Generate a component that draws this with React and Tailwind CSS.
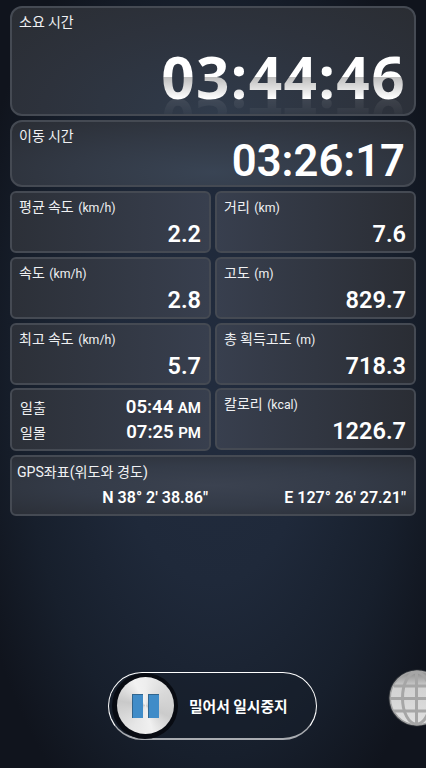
const FONT = "font-['Roboto','Noto_Sans_CJK_KR',sans-serif]";

const Card = ({ className = "", children }) => {
  return <div className={`border-2 border-[#454a53] ${className}`}>{children}</div>;
};

const Label = ({ unit, children }) => {
  return (
    <div className="flex items-baseline text-[14px] leading-[20px] text-[#f0f1f3] whitespace-pre">
      <span className="font-['Noto_Sans_CJK_KR',sans-serif]">{children}</span>
      {unit && <span className="ml-[4.5px] text-[12.3px]">({unit})</span>}
    </div>
  );
};

const StatCard = ({ label, unit, value }) => {
  return (
    <Card className="flex h-[62px] flex-col justify-between rounded-md pt-[3px] pr-[8px] pb-[4px] pl-[7px]">
      <Label unit={unit}>{label}</Label>
      <div className="text-right text-[23.5px] leading-[26px] font-semibold text-white">
        {value}
      </div>
    </Card>
  );
};

const SunRow = ({ label, time, period }) => {
  return (
    <div className="flex h-[25px] items-center justify-between">
      <Label>{label}</Label>
      <div className="flex items-baseline pt-px font-semibold text-white">
        <span className="text-[18.6px] leading-[25px]">{time}</span>
        <span className="ml-[4.5px] text-[15px] leading-[20px]">{period}</span>
      </div>
    </div>
  );
};

const Globe = () => {
  return (
    <svg viewBox="0 0 58 58" className="h-[58px] w-[58px]">
      <defs>
        <linearGradient id="globe" x1="0" y1="0" x2="0" y2="1">
          <stop offset="0" stopColor="#8a8a8a" />
          <stop offset="0.3" stopColor="#d2d2d2" />
          <stop offset="1" stopColor="#e0e0e0" />
        </linearGradient>
      </defs>
      <circle cx="29" cy="29" r="28.5" fill="#30343a" />
      <circle cx="29" cy="29" r="26.8" fill="url(#globe)" stroke="#a5a5a5" strokeWidth="1.5" />
      <g fill="none" stroke="#a6a6a6" strokeWidth="3">
        <path d="M28.5 3v52M3 29.5h52M6 17h46M6 42h46" />
        <ellipse cx="28.5" cy="29" rx="14" ry="26" />
      </g>
    </svg>
  );
};

const PauseSlider = () => {
  return (
    <div className="flex h-[68px] w-[209px] items-center rounded-full border border-b-2 border-white border-b-[#a9acb1] bg-[#161e2a]/50 pl-[3px]">
      <div className="flex h-[66px] w-[66px] items-center justify-center rounded-full bg-[#080b12]">
        <div className="flex h-[57px] w-[57px] items-center justify-center gap-[5px] rounded-full bg-[conic-gradient(#eeeeee,#d9d9d9_55deg,#cbcbcb_115deg,#f0f0f0_165deg,#e6e6e6_210deg,#c9c9c9_280deg,#f2f2f2_335deg,#eeeeee)]">
          <div className="h-[24px] w-[11px] border-t border-l border-[#31658e] bg-[#408cc8]" />
          <div className="h-[24px] w-[11px] border-t border-l border-[#31658e] bg-[#408cc8]" />
        </div>
      </div>
      <span className="ml-[11px] font-['Noto_Sans_CJK_KR',sans-serif] text-[14.8px] leading-[20px] font-bold whitespace-pre text-white">
        밀어서 일시중지
      </span>
    </div>
  );
};

const App = () => {
  return (
    <div
      className={`relative flex h-screen w-full flex-col overflow-hidden bg-[radial-gradient(ellipse_60%_65%_at_50%_50%,#222c3e_0%,#1f293a_40%,#171f2c_75%,#10141d_100%)] px-[10px] pt-[6px] ${FONT}`}
    >
      {/* 시간 */}
      <Card className="flex h-[110px] flex-col overflow-hidden rounded-xl bg-[radial-gradient(ellipse_at_50%_100%,#303b4b,#2d323c_60%,#2a2d33)] pt-[3px] pr-[8px] pl-[7px]">
        <Label>소요 시간</Label>
        <div className="mt-[5px] self-end bg-[linear-gradient(to_bottom,#ffffff_51%,#bdbdbd_51.5%,#ffffff_78%)] bg-clip-text font-['Noto_Sans',sans-serif] text-[58.5px] leading-[80px] font-bold tracking-[1.4px] text-transparent [-webkit-box-reflect:below_-34px_linear-gradient(transparent_50%,rgba(255,255,255,0.15))]">
          03:44:46
        </div>
      </Card>
      <Card className="mt-[4px] flex h-[67px] flex-col rounded-xl bg-[radial-gradient(ellipse_at_50%_80%,#394454,#323945_50%,#2a2d34)] pt-[3px] pr-[9px] pl-[7px]">
        <Label>이동 시간</Label>
        <div className="-mt-[8px] self-end text-[43.6px] leading-[50px] font-semibold text-white">
          03:26:17
        </div>
      </Card>

      {/* 운동 정보 */}
      <div className="mt-[4px] flex gap-[4px]">
        <div className="flex w-[201px] flex-col gap-[3.8px] [&>div]:bg-[linear-gradient(to_right,#2c3038,#383f4e)]">
          <StatCard label="평균 속도" unit="km/h" value="2.2" />
          <StatCard label="속도" unit="km/h" value="2.8" />
          <StatCard label="최고 속도" unit="km/h" value="5.7" />
          <Card className="h-[63px] rounded-md pt-[4px] pr-[8px] pl-[8px]">
            <SunRow label="일출" time="05:44" period="AM" />
            <SunRow label="일몰" time="07:25" period="PM" />
          </Card>
        </div>
        <div className="flex w-[201px] flex-col gap-[3.8px] [&>div]:bg-[linear-gradient(to_right,#383f4e,#2a2d34)]">
          <StatCard label="거리" unit="km" value="7.6" />
          <StatCard label="고도" unit="m" value="829.7" />
          <StatCard label="총 획득고도" unit="m" value="718.3" />
          <StatCard label="칼로리" unit="kcal" value="1226.7" />
        </div>
      </div>

      {/* GPS 좌표 */}
      <Card className="mt-[4px] flex h-[61px] flex-col rounded-md bg-[radial-gradient(ellipse_at_center,#3b4250,#343b48_50%,#2b2f37)] pt-[4px] pr-[8px] pl-[5px]">
        <Label>
          <span className="font-['Roboto','Noto_Sans_CJK_KR',sans-serif] text-[14.1px]">
            GPS좌표(위도와 경도)
          </span>
        </Label>
        <div className="mt-[6px] flex text-[16px] leading-[20px] font-semibold text-white">
          <span className="w-[191px] text-right">N 38° 2' 38.86"</span>
          <span className="flex-1 text-right">E 127° 26' 27.21"</span>
        </div>
      </Card>

      {/* 하단 버튼 */}
      <div className="mt-auto mb-[28px] flex justify-center pr-px">
        <PauseSlider />
      </div>
      <button className="absolute right-[-20px] bottom-[41px]" aria-label="지도">
        <Globe />
      </button>
    </div>
  );
};

export default App;
